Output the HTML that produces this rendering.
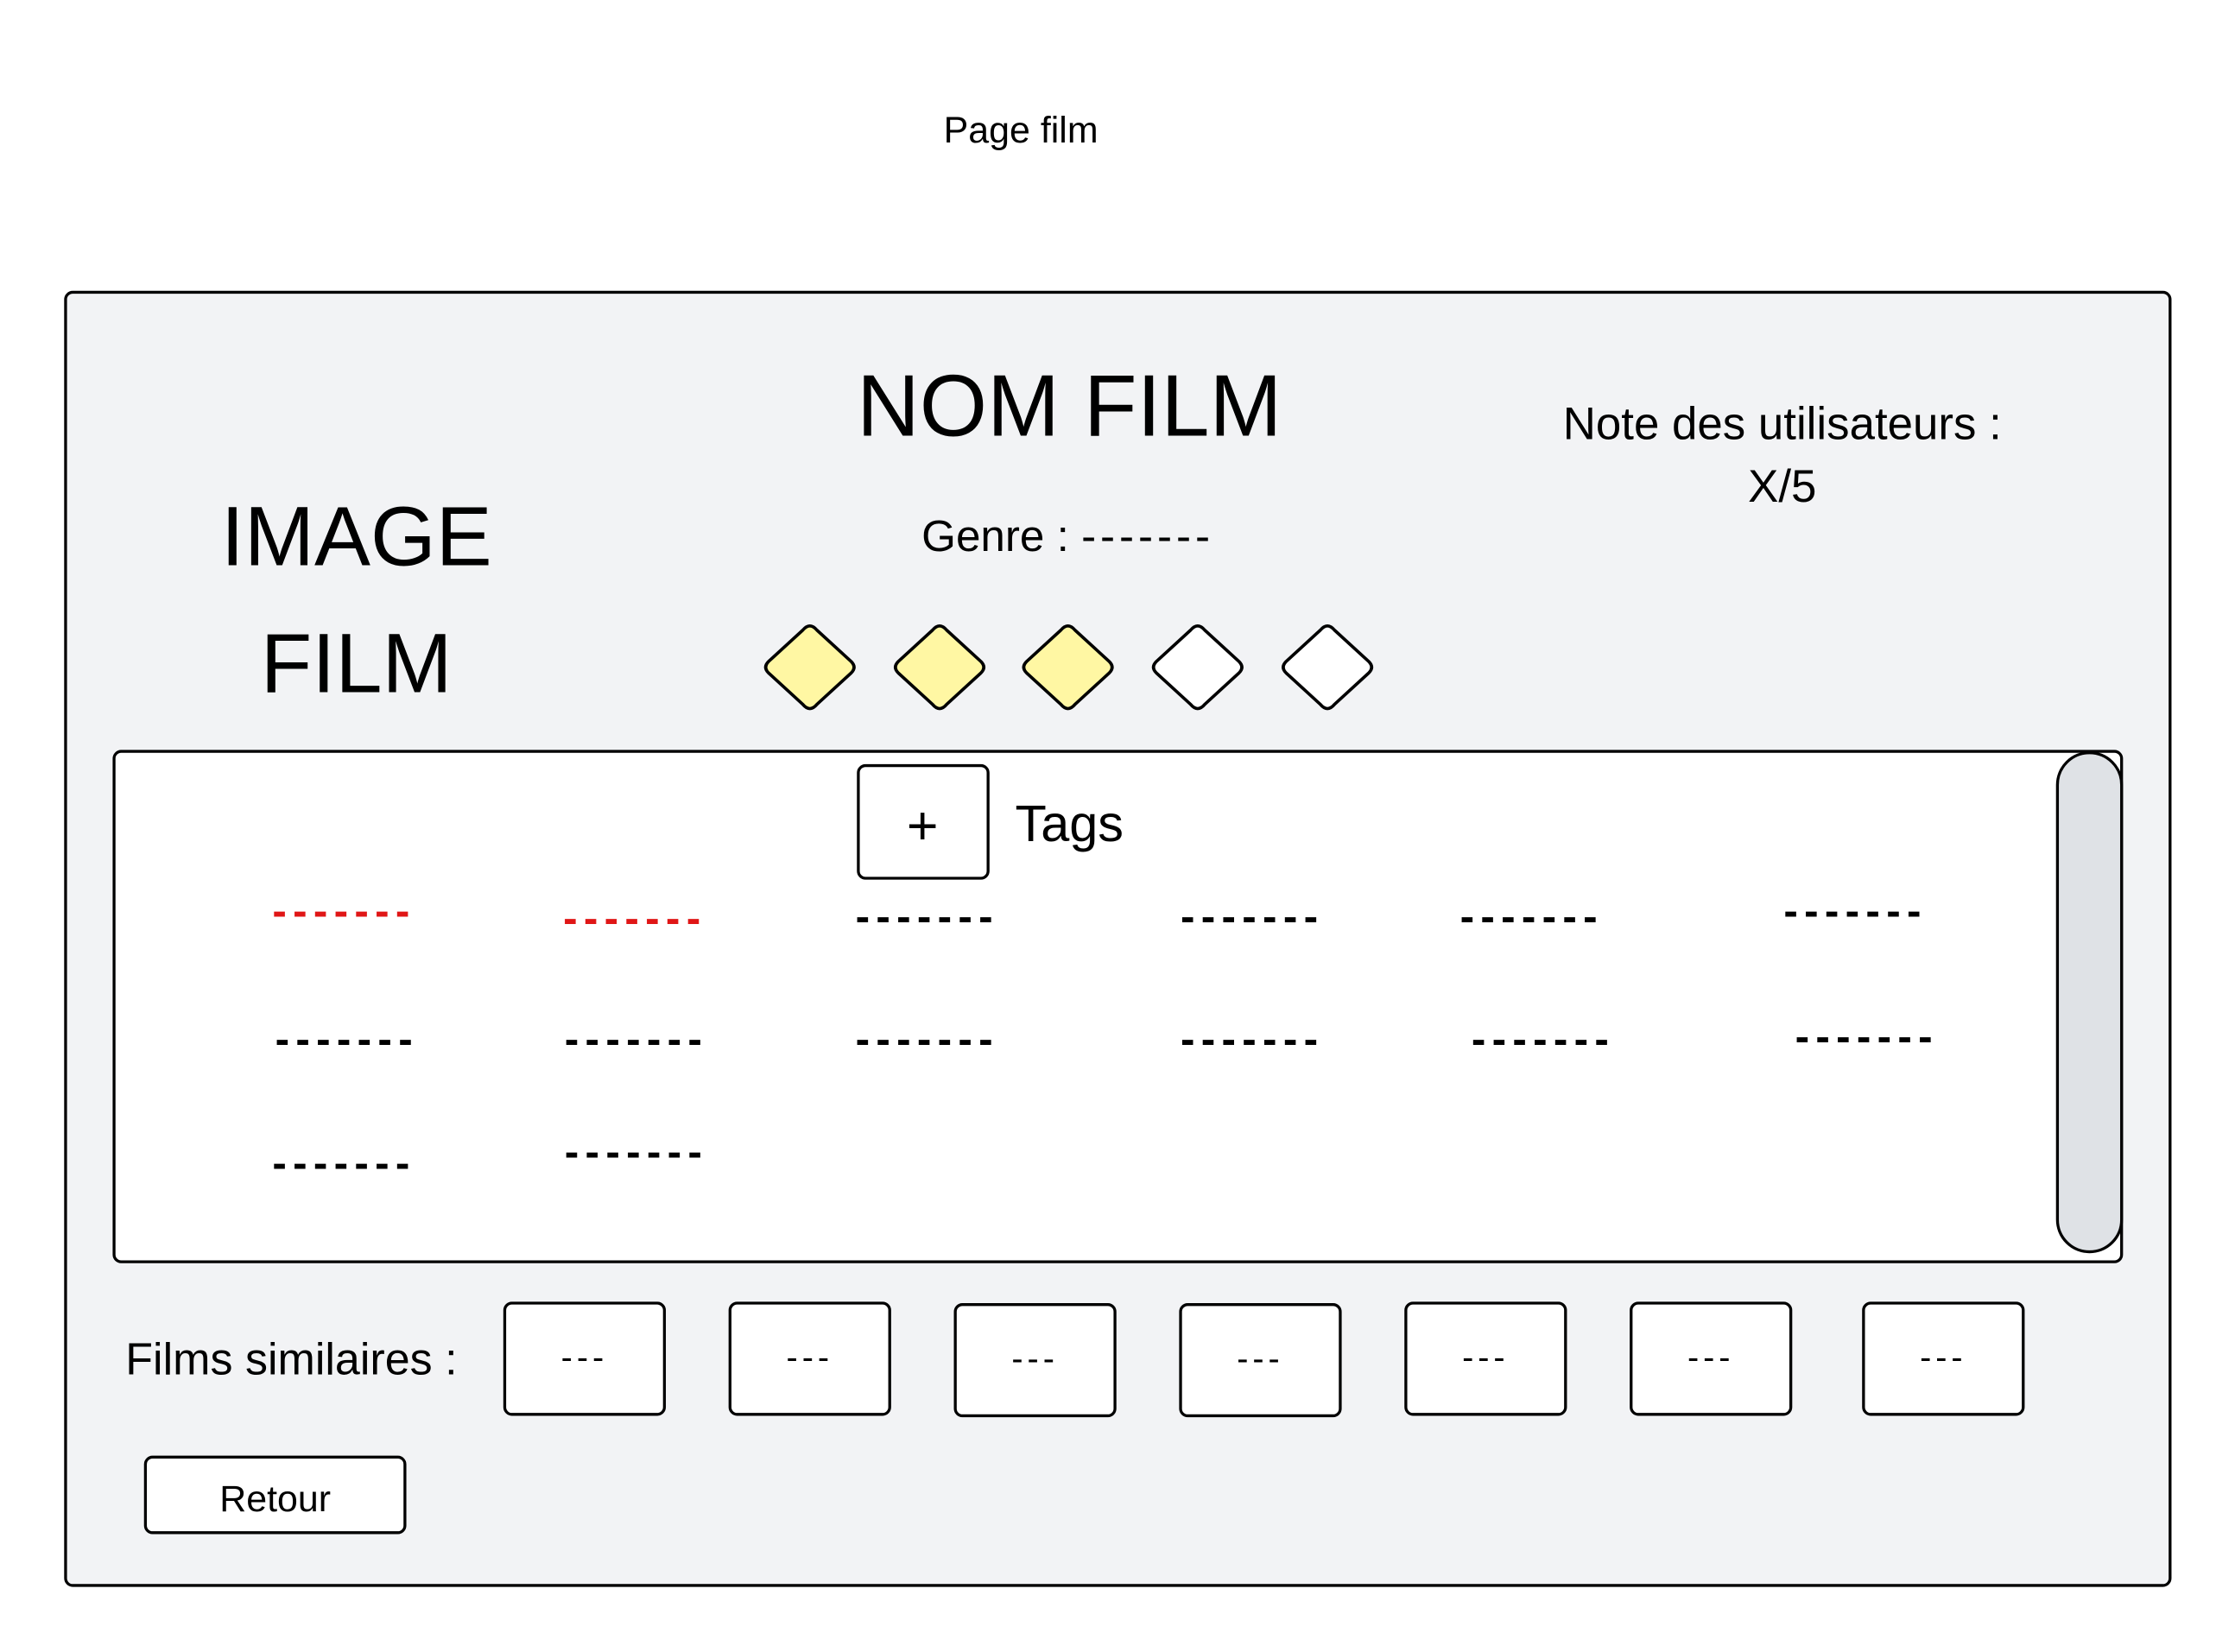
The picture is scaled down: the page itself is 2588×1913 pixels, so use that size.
<!DOCTYPE html>
<html><head><meta charset="utf-8"><style>
html,body{margin:0;padding:0;background:#fff;width:2588px;height:1913px;overflow:hidden}
#w{position:absolute;left:0;top:0;width:1560px;height:1153px;transform:scale(1.651);transform-origin:0 0;font-family:"Liberation Sans",sans-serif;color:#000}
.a{position:absolute}
.c{position:absolute;transform:translate(-50%,-50%);line-height:1;white-space:nowrap}
.box{position:absolute;border:2px solid #000;border-radius:6px;background:#fff;box-sizing:border-box}
.d{position:absolute;font-size:30px;letter-spacing:4.4px;line-height:1;white-space:nowrap;font-weight:bold}
.r{color:#e01616}
.s{position:absolute;width:114px;height:80px;top:913px}
.s .c{font-size:24px;letter-spacing:3px}
</style></head><body><div id="w">
<div class="c" style="left:716px;top:91px;font-size:26px">Page film</div>
<div class="box" style="left:45px;top:204px;width:1478px;height:909px;background:#f2f3f5"></div>
<div class="c" style="left:750px;top:285px;font-size:61px">NOM FILM</div>
<div class="c" style="left:1250px;top:297px;font-size:32px">Note des utilisateurs :</div>
<div class="c" style="left:1250px;top:341px;font-size:32px">X/5</div>
<div class="c" style="left:250px;top:377px;font-size:59px">IMAGE</div>
<div class="c" style="left:250px;top:466px;font-size:59px">FILM</div>
<div class="c" style="left:749px;top:376px;font-size:31px">Genre : <span style="letter-spacing:3px">-------</span></div>
<svg class="a" style="left:0;top:0" width="1560" height="1153">
<g stroke="#000" stroke-width="2.2" stroke-linejoin="round">
<path d="M563 442 Q568 436 573 442 L597 464 Q601 468 597 472 L573 494 Q568 500 563 494 L539 472 Q535 468 539 464 Z" fill="#fff7a3"/>
<path d="M654 442 Q659 436 664 442 L688 464 Q692 468 688 472 L664 494 Q659 500 654 494 L630 472 Q626 468 630 464 Z" fill="#fff7a3"/>
<path d="M744 442 Q749 436 754 442 L778 464 Q782 468 778 472 L754 494 Q749 500 744 494 L720 472 Q716 468 720 464 Z" fill="#fff7a3"/>
<path d="M835 442 Q840 436 845 442 L869 464 Q873 468 869 472 L845 494 Q840 500 835 494 L811 472 Q807 468 811 464 Z" fill="#fff"/>
<path d="M926 442 Q931 436 936 442 L960 464 Q964 468 960 472 L936 494 Q931 500 926 494 L902 472 Q898 468 902 464 Z" fill="#fff"/>
</g></svg>
<div class="box" style="left:79px;top:526px;width:1410px;height:360px"></div>
<div class="box" style="left:1442px;top:527px;width:47px;height:352px;border-radius:24px;background:#dfe2e6"></div>
<div class="box" style="left:601px;top:536px;width:93px;height:81px"></div>
<div class="c" style="left:647px;top:580px;font-size:38px">+</div>
<div class="c" style="left:750px;top:578px;font-size:36px">Tags</div>
<div class="d r" style="left:191px;top:625px">-------</div>
<div class="d r" style="left:395px;top:630px">-------</div>
<div class="d" style="left:600px;top:629px">-------</div>
<div class="d" style="left:828px;top:629px">-------</div>
<div class="d" style="left:1024px;top:629px">-------</div>
<div class="d" style="left:1251px;top:625px">-------</div>
<div class="d" style="left:193px;top:715px">-------</div>
<div class="d" style="left:396px;top:715px">-------</div>
<div class="d" style="left:600px;top:715px">-------</div>
<div class="d" style="left:828px;top:715px">-------</div>
<div class="d" style="left:1032px;top:715px">-------</div>
<div class="d" style="left:1259px;top:713px">-------</div>
<div class="d" style="left:191px;top:802px">-------</div>
<div class="d" style="left:396px;top:794px">-------</div>
<div class="a" style="left:88px;top:938px;font-size:31.5px;line-height:1">Films similaires :</div>
<div class="box s" style="left:353px"><div class="c" style="left:50%;top:50%">---</div></div>
<div class="box s" style="left:511px"><div class="c" style="left:50%;top:50%">---</div></div>
<div class="box s" style="left:669px;top:914px"><div class="c" style="left:50%;top:50%">---</div></div>
<div class="box s" style="left:827px;top:914px"><div class="c" style="left:50%;top:50%">---</div></div>
<div class="box s" style="left:985px"><div class="c" style="left:50%;top:50%">---</div></div>
<div class="box s" style="left:1143px"><div class="c" style="left:50%;top:50%">---</div></div>
<div class="box s" style="left:1306px"><div class="c" style="left:50%;top:50%">---</div></div>
<div class="box" style="left:101px;top:1021px;width:184px;height:55px"><div class="c" style="left:50%;top:55%;font-size:26px">Retour</div></div>
</div></body></html>
